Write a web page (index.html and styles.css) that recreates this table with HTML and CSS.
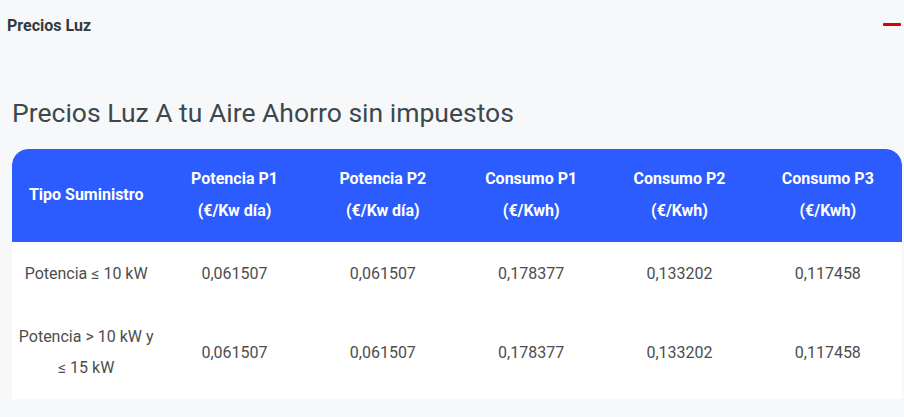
FILE: index.html
```html
<!DOCTYPE html>
<html lang="es">
<head>
<meta charset="utf-8">
<title>Precios Luz</title>
<link rel="stylesheet" href="styles.css">
</head>
<body>
<div class="bar">
  <span class="bar-title">Precios Luz</span>
  <span class="toggle"></span>
</div>
<div class="content">
  <h2 class="heading">Precios Luz A tu Aire Ahorro sin impuestos</h2>
  <table class="prices">
    <thead>
      <tr>
        <th>Tipo Suministro</th>
        <th>Potencia P1<br>(€/Kw día)</th>
        <th>Potencia P2<br>(€/Kw día)</th>
        <th>Consumo P1<br>(€/Kwh)</th>
        <th>Consumo P2<br>(€/Kwh)</th>
        <th>Consumo P3<br>(€/Kwh)</th>
      </tr>
    </thead>
    <tbody>
      <tr>
        <td>Potencia ≤ 10 kW</td>
        <td>0,061507</td>
        <td>0,061507</td>
        <td>0,178377</td>
        <td>0,133202</td>
        <td>0,117458</td>
      </tr>
      <tr>
        <td>Potencia &gt; 10 kW y ≤ 15 kW</td>
        <td>0,061507</td>
        <td>0,061507</td>
        <td>0,178377</td>
        <td>0,133202</td>
        <td>0,117458</td>
      </tr>
    </tbody>
  </table>
</div>
</body>
</html>
```
FILE: styles.css
```css
html, body {
  margin: 0;
  padding: 0;
  background: #f7f8fa;
  font-family: Roboto, "Liberation Sans", sans-serif;
}
.bar {
  display: flex;
  align-items: center;
  justify-content: space-between;
  height: 50px;
  padding: 0 3px 0 7px;
}
.bar-title {
  font-size: 16px;
  font-weight: 700;
  color: #333a3d;
}
.toggle {
  width: 18px;
  height: 3px;
  background: #d90000;
  border-radius: 1px;
  margin-top: -2px;
}
.content {
  padding: 44px 2px 0 12px;
}
.heading {
  margin: 0 0 17px;
  font-size: 26.5px;
  font-weight: 400;
  line-height: 38px;
  color: #3b484d;
}
.prices {
  width: 890px;
  border-collapse: separate;
  border-spacing: 0;
  table-layout: fixed;
  background: #fff;
  border-radius: 16px 16px 0 0;
  overflow: hidden;
}
.prices th {
  background: #2c5cfd;
  color: #fff;
  font-size: 16px;
  font-weight: 700;
  line-height: 32px;
  padding: 14px 4px 15px;
  text-align: center;
}
.prices th:first-child { border-top-left-radius: 16px; }
.prices th:last-child { border-top-right-radius: 16px; }
.prices td {
  font-size: 16px;
  color: #4d4d4d;
  line-height: 31px;
  padding: 16px 4px;
  text-align: center;
}
.prices td:first-child {
  padding-left: 2px;
  padding-right: 2px;
}
```
